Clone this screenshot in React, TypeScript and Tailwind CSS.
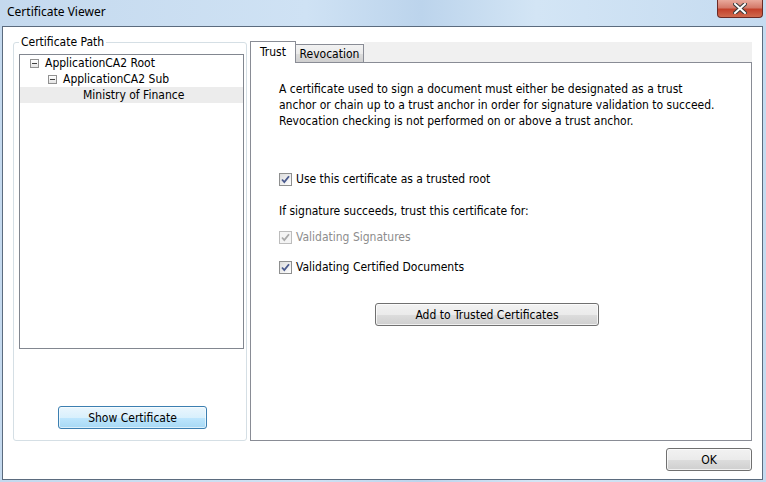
import React from "react";

function ExpandBox() {
  return (
    <span className="inline-flex w-[9px] h-[9px] border border-[#919191] bg-gradient-to-b from-white to-[#e4e4e4] items-center justify-center shrink-0">
      <span className="block w-[5px] h-px bg-[#404040]" />
    </span>
  );
}

function CheckBox({ disabled }: { disabled?: boolean }) {
  return (
    <span
      className={
        "relative inline-flex w-[13px] h-[13px] border shrink-0 items-center justify-center " +
        (disabled ? "border-[#bcbcbc] bg-[#f4f4f4]" : "border-[#8e8f8f] bg-gradient-to-br from-[#dcdcdc] to-white")
      }
    >
      <svg width="9" height="9" viewBox="0 0 9 9">
        <path
          d="M1 4.5 L3.3 7 L8 1.2"
          fill="none"
          stroke={disabled ? "#a9a9a9" : "#4a5a8e"}
          strokeWidth="1.8"
        />
      </svg>
    </span>
  );
}

function Button({ children, w, focused }: { children: React.ReactNode; w: string; focused?: boolean }) {
  return (
    <div
      className={
        w +
        " h-[23px] rounded-[3px] border flex items-center justify-center text-[12px] " +
        (focused
          ? "border-[#3c7fb1] bg-[linear-gradient(to_bottom,#eaf6fd_0%,#d9f0fc_50%,#bee6fd_51%,#a7d9f5_100%)] shadow-[inset_0_0_0_1px_rgba(255,255,255,0.6)]"
          : "border-[#707070] bg-[linear-gradient(to_bottom,#f2f2f2_0%,#ebebeb_50%,#dddddd_51%,#cfcfcf_100%)] shadow-[inset_0_0_0_1px_rgba(255,255,255,0.7)]")
      }
    >
      {children}
    </div>
  );
}

export default function App() {
  return (
    <div
      className="w-[766px] h-[482px] flex flex-col bg-[linear-gradient(to_right,#c4d9ee_0%,#cfe2f4_40%,#bcd4ec_55%,#d3e5f5_70%,#c5dbf0_100%)] text-black"
      style={{ fontFamily: "'DejaVu Sans Condensed', 'DejaVu Sans', sans-serif" }}
    >
      {/* Title bar */}
      <div className="h-[26px] flex items-start justify-between shrink-0">
        <span
          className="ml-[7px] mt-[4px] text-[12px] leading-[16px] text-black"
          style={{ fontFamily: "'Noto Sans', 'Open Sans', sans-serif" }}
        >
          Certificate Viewer
        </span>
        <div className="mr-[3px] w-[46px] h-[18px] rounded-b-[4px] border border-t-0 border-[#6b2a25] bg-[linear-gradient(to_bottom,#e9a99c_0%,#d47a6a_45%,#c3412b_55%,#d06a4e_100%)] flex items-center justify-center">
          <svg width="14" height="11" viewBox="0 0 14 11">
            <path d="M2 1 L12 10 M12 1 L2 10" stroke="#3a3a3a" strokeWidth="4" strokeLinecap="square" />
            <path d="M2 1 L12 10 M12 1 L2 10" stroke="#ffffff" strokeWidth="2" strokeLinecap="square" />
          </svg>
        </div>
      </div>

      {/* Client */}
      <div className="ml-[2px] mr-[3px] mb-[2px] h-[454px] border border-[#5b6b7e] bg-white flex flex-col text-[11px]">
        <div className="flex items-start pl-[10px] pr-[10px] pt-[13px]">
          {/* Group box */}
          <div className="relative mt-[2px] w-[234px] h-[399px] border border-[#d5dfe5] rounded-[3px] flex flex-col items-start">
            <span className="absolute left-[5px] -top-[8px] px-[2px] bg-white text-[12px] leading-[14px]">
              Certificate Path
            </span>
            <div className="ml-[5px] mt-[11px] w-[225px] h-[295px] border border-[#828790] bg-white pt-[0px] flex flex-col">
              <div className="h-[16px] flex items-center pl-[10px] gap-[6px] text-[12px]">
                <ExpandBox />
                <span>ApplicationCA2 Root</span>
              </div>
              <div className="h-[16px] flex items-center pl-[28px] gap-[6px] text-[12px]">
                <ExpandBox />
                <span>ApplicationCA2 Sub</span>
              </div>
              <div className="h-[16px] flex items-center pl-[63px] bg-[#ececec] text-[12px]">
                <span>Ministry of Finance</span>
              </div>
            </div>
            <div className="mt-[57px] ml-[44px]">
              <Button w="w-[149px]" focused>
                <span className="text-[12px]">Show Certificate</span>
              </Button>
            </div>
          </div>

          {/* Tabs */}
          <div className="ml-[3px] w-[502px] flex flex-col">
            <div className="flex items-end h-[22px]">
              <div className="w-[46px] h-[22px] border border-b-0 border-[#898c95] bg-white flex items-start justify-center pt-[3px] text-[12px] leading-[14px] relative z-10 -mb-px">
                Trust
              </div>
              <div className="w-[68px] h-[18px] border border-l-0 border-b-0 border-[#898c95] bg-[linear-gradient(to_bottom,#f2f2f2_0%,#ebebeb_50%,#dddddd_51%,#cfcfcf_100%)] flex items-center justify-center text-[12px] leading-[14px]">
                Revocation
              </div>
              <div className="flex-1 h-[20px] bg-[#f0f0f0]" />
            </div>
            <div className="h-[379px] border border-[#898c95] bg-white flex flex-col items-start pl-[28px] pt-[18px] text-[12px] leading-[16px]">
              <p className="w-[438px]">
                A certificate used to sign a document must either be designated as a trust anchor or chain up to a
                trust anchor in order for signature validation to succeed. Revocation checking is not performed on or
                above a trust anchor.
              </p>
              <div className="mt-[42px] flex items-center gap-[4px] h-[16px]">
                <CheckBox />
                <span>Use this certificate as a trusted root</span>
              </div>
              <div className="mt-[16px] h-[16px]">If signature succeeds, trust this certificate for:</div>
              <div className="mt-[10px] flex items-center gap-[4px] h-[16px] text-[#8d8d8d]">
                <CheckBox disabled />
                <span>Validating Signatures</span>
              </div>
              <div className="mt-[14px] flex items-center gap-[4px] h-[16px]">
                <CheckBox />
                <span>Validating Certified Documents</span>
              </div>
              <div className="mt-[28px] ml-[96px]">
                <Button w="w-[224px]">
                  <span className="text-[12px]">Add to Trusted Certificates</span>
                </Button>
              </div>
            </div>
          </div>
        </div>
        <div className="flex justify-end pr-[10px] mt-[7px]">
          <Button w="w-[86px]">
            <span className="text-[12px]">OK</span>
          </Button>
        </div>
      </div>
    </div>
  );
}
